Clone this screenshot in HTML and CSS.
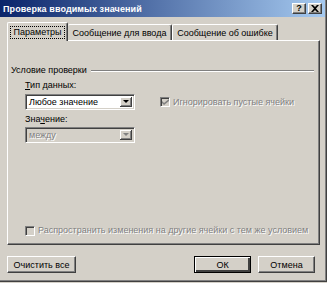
FILE: index.html
```html
<!DOCTYPE html>
<html lang="ru">
<head>
<meta charset="utf-8">
<title>Проверка вводимых значений</title>
<link rel="stylesheet" href="styles.css">
</head>
<body>
<div class="window">
  <div class="titlebar">
    <span class="title">Проверка вводимых значений</span>
    <div class="caption-buttons">
      <span class="cap-btn">?</span>
      <span class="cap-btn">
        <svg width="8" height="7" viewBox="0 0 8 7"><path d="M0 0h2l2 2 2-2h2L5 3.5 8 7H6L4 5 2 7H0l3-3.5z" fill="#000"/></svg>
      </span>
    </div>
  </div>
  <div class="body">
    <div class="tabs">
      <div class="tab active t1"><span class="focus">Параметры</span></div>
      <div class="tab t2">Сообщение для ввода</div>
      <div class="tab t3">Сообщение об ошибке</div>
    </div>
    <div class="panel">
      <div class="group-head">
        <span>Условие проверки</span>
        <span class="etched"></span>
      </div>
      <div class="field first">
        <label class="label"><u>Т</u>ип данных:</label>
        <div class="combo-row">
          <div class="combo">
            <span class="combo-text">Любое значение</span>
            <span class="combo-btn"><span class="arrow"></span></span>
          </div>
          <div class="check disabled ign">
            <span class="box"><svg width="7" height="7" viewBox="0 0 7 7"><path d="M0 2l2 2 5-4v2L2 6 0 4z" fill="#808080"/></svg></span>
            <span>Игнорировать пустые ячейки</span>
          </div>
        </div>
      </div>
      <div class="field second">
        <label class="label disabled-label">Зна<u>ч</u>ение:</label>
        <div class="combo disabled">
          <span class="combo-text">между</span>
          <span class="combo-btn"><span class="arrow"></span></span>
        </div>
      </div>
      <div class="spacer"></div>
      <div class="check disabled spread">
        <span class="box"></span>
        <span>Распространить изменения на другие ячейки с тем же условием</span>
      </div>
    </div>
    <div class="buttons">
      <button class="btn clear">Очистить все</button>
      <div class="right-buttons">
        <button class="btn default">ОК</button>
        <button class="btn">Отмена</button>
      </div>
    </div>
  </div>
</div>
</body>
</html>
```
FILE: styles.css
```css
* { box-sizing: border-box; }
html, body { margin: 0; padding: 0; }
body {
  width: 327px;
  height: 283px;
  background: #d4d0c8;
  font-family: "Liberation Sans", Arial, sans-serif;
  font-size: 9px;
  color: #000;
  overflow: hidden;
}
.window {
  width: 327px;
  height: 282px;
  background: #d4d0c8;
  border-right: 1px solid #404040;
  border-bottom: 1px solid #404040;
  box-shadow: inset -1px -1px 0 #808080;
  display: flex;
  flex-direction: column;
}
.titlebar {
  height: 17px;
  flex: 0 0 17px;
  margin-right: 1px;
  background: linear-gradient(to right, #0a246a, #a6caf0);
  display: flex;
  align-items: center;
  justify-content: space-between;
  padding: 0 3px 0 3px;
}
.title {
  color: #fff;
  font-weight: bold;
  font-size: 9px;
  letter-spacing: 0.1px;
}
.caption-buttons { display: flex; gap: 2px; }
.cap-btn {
  width: 14px;
  height: 11px;
  background: #d4d0c8;
  border-top: 1px solid #fff;
  border-left: 1px solid #fff;
  border-right: 1px solid #404040;
  border-bottom: 1px solid #404040;
  box-shadow: inset -1px -1px 0 #808080;
  display: flex;
  align-items: center;
  justify-content: center;
  font-weight: bold;
  font-size: 9px;
  line-height: 1;
}
.body {
  flex: 1;
  display: flex;
  flex-direction: column;
  padding: 5px 6px 8px 7px;
}
.tabs {
  display: flex;
  align-items: flex-end;
  height: 18px;
}
.tab {
  height: 16px;
  display: flex;
  align-items: center;
  justify-content: center;
  border-top: 1px solid #fff;
  border-left: 1px solid #fff;
  border-right: 1px solid #404040;
  box-shadow: inset -1px 0 0 #808080;
  border-top-left-radius: 2px;
  border-top-right-radius: 2px;
  white-space: nowrap;
}
.t1 { width: 61px; }
.t2 { width: 104px; border-left: none; }
.t3 { width: 106px; }
.tab.active {
  height: 19px;
  margin-bottom: -1px;
  background: #d4d0c8;
  position: relative;
  z-index: 1;
}
.focus {
  border: 1px dotted #000;
  padding: 0 3px;
  line-height: 11px;
}
.panel {
  flex: 0 0 205px;
  border-top: 1px solid #fff;
  border-left: 1px solid #fff;
  border-right: 1px solid #404040;
  border-bottom: 1px solid #404040;
  box-shadow: inset -1px -1px 0 #808080;
  display: flex;
  flex-direction: column;
  padding: 24px 5px 8px 3px;
}
.group-head {
  display: flex;
  align-items: center;
  gap: 4px;
  height: 11px;
  line-height: 11px;
}
.etched {
  flex: 1;
  height: 2px;
  border-top: 1px solid #808080;
  border-bottom: 1px solid #fff;
}
.field {
  display: flex;
  flex-direction: column;
  padding-left: 14px;
  gap: 3px;
}
.field.first { margin-top: 4px; }
.field.second { margin-top: 4px; gap: 2px; }
.label { line-height: 11px; }
.combo-row {
  display: flex;
  align-items: center;
}
.combo {
  width: 110px;
  height: 16px;
  background: #fff;
  border-top: 1px solid #808080;
  border-left: 1px solid #808080;
  border-right: 1px solid #fff;
  border-bottom: 1px solid #fff;
  box-shadow: inset 1px 1px 0 #404040, inset -1px -1px 0 #d4d0c8;
  display: flex;
  align-items: stretch;
  padding: 2px;
}
.combo-text {
  flex: 1;
  line-height: 10px;
  padding-left: 1px;
}
.combo-btn {
  width: 12px;
  background: #d4d0c8;
  border-right: 1px solid #404040;
  border-bottom: 1px solid #404040;
  box-shadow: inset 1px 1px 0 #fff, inset -1px -1px 0 #808080;
  display: flex;
  align-items: center;
  justify-content: center;
}
.arrow {
  width: 0;
  height: 0;
  border-left: 3px solid transparent;
  border-right: 3px solid transparent;
  border-top: 3px solid #000;
}
.combo.disabled { background: #d4d0c8; }
.combo.disabled .combo-text { color: #808080; text-shadow: 1px 1px 0 #fff; }
.combo.disabled .arrow { border-top-color: #808080; }
.check {
  display: flex;
  align-items: center;
  gap: 3px;
  white-space: nowrap;
  line-height: 11px;
}
.check.disabled { color: #808080; text-shadow: 1px 1px 0 #fff; }
.ign { margin-left: 25px; }
.box {
  flex: 0 0 10px;
  width: 10px;
  height: 10px;
  background: #d4d0c8;
  border-top: 1px solid #808080;
  border-left: 1px solid #808080;
  border-right: 1px solid #fff;
  border-bottom: 1px solid #fff;
  box-shadow: inset 1px 1px 0 #404040;
  display: flex;
  align-items: center;
  justify-content: center;
}
.spacer { flex: 1; }
.spread { padding-left: 14px; }
.buttons {
  display: flex;
  justify-content: space-between;
  margin-top: 11px;
  padding-right: 5px;
}
.right-buttons { display: flex; gap: 7px; }
.btn {
  font: inherit;
  color: #000;
  height: 17px;
  padding: 0;
  background: #d4d0c8;
  border-top: 1px solid #fff;
  border-left: 1px solid #fff;
  border-right: 1px solid #404040;
  border-bottom: 1px solid #404040;
  box-shadow: inset -1px -1px 0 #808080;
  width: 57px;
}
.btn.clear { width: 69px; }
.btn.default {
  border: 1px solid #000;
  box-shadow: inset 1px 1px 0 #fff, inset -2px -2px 0 #404040;
}
```
